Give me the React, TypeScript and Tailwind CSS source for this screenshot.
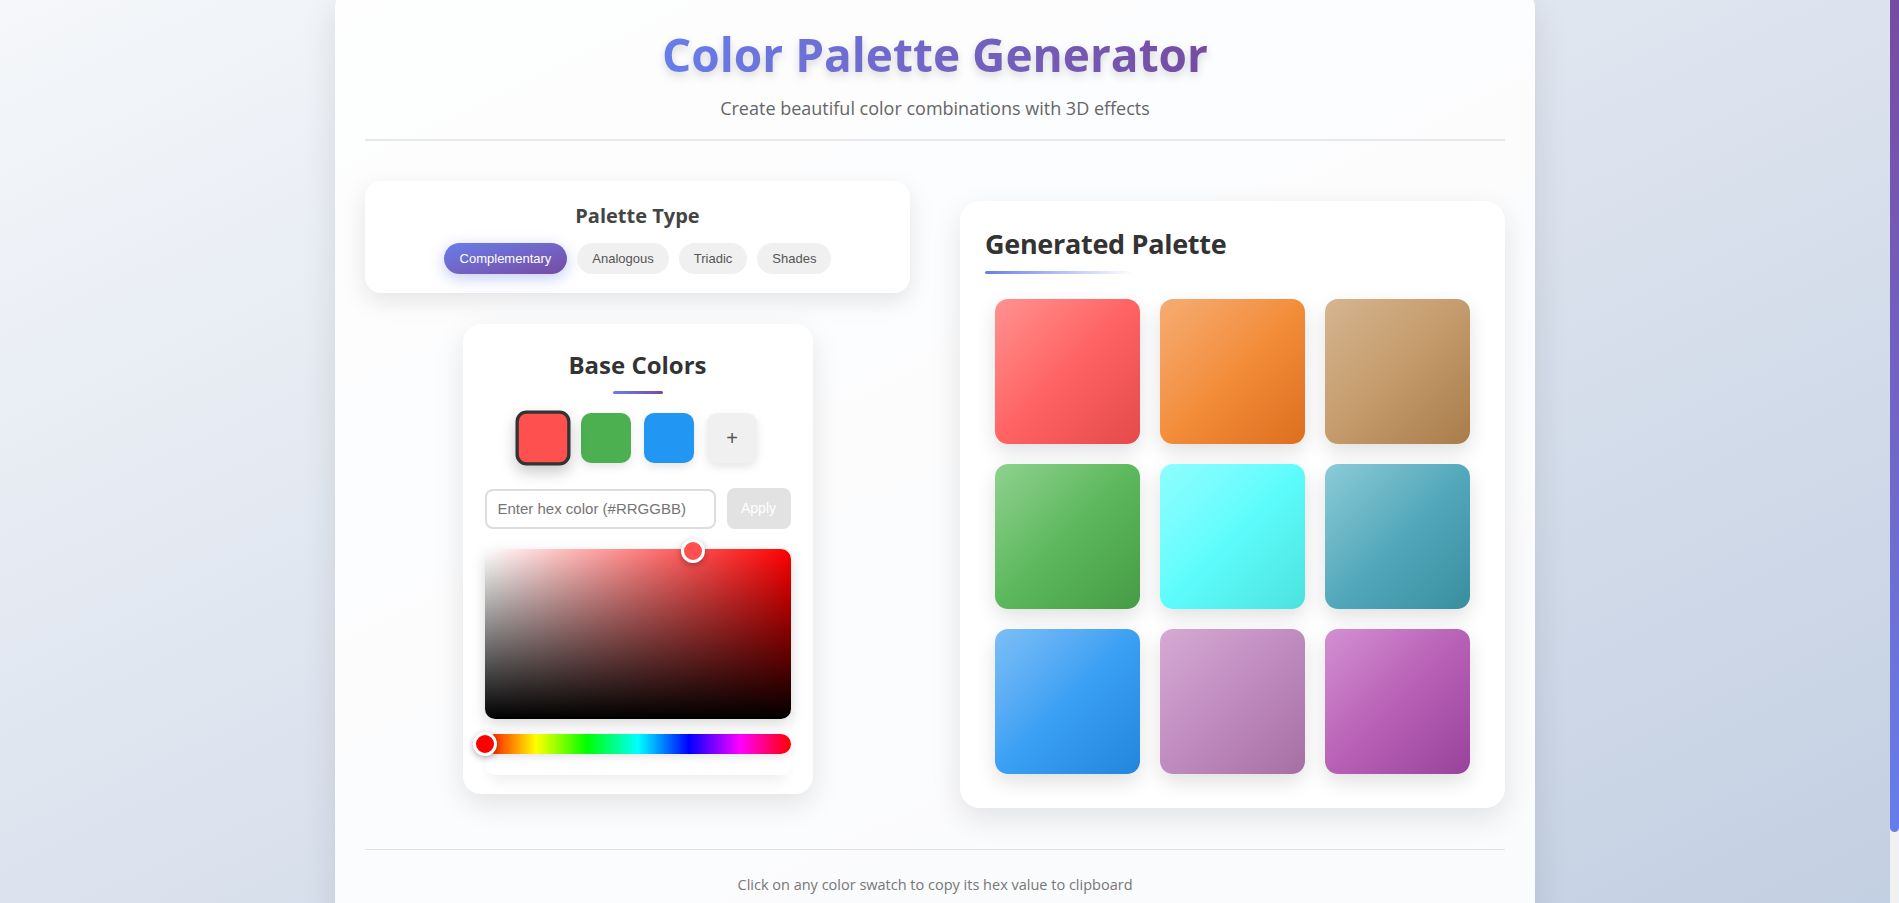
import React from "react";

const swatches = [
  "from-[#ff9191] via-[#ff6262] to-[#e44a4a]",
  "from-[#f6ac72] via-[#f38d3a] to-[#dc6f1e]",
  "from-[#d6b590] via-[#c49b6c] to-[#a97c4a]",
  "from-[#8fd18f] via-[#5cb85c] to-[#469b44]",
  "from-[#8efefe] via-[#5dfcfc] to-[#4ce2de]",
  "from-[#8ccbd7] via-[#53a9bb] to-[#388e9f]",
  "from-[#7cbef6] via-[#3aa0f4] to-[#2186dc]",
  "from-[#d5aad4] via-[#c08bbf] to-[#a56fa2]",
  "from-[#d390d2] via-[#b860b6] to-[#98439b]",
];

export default function App() {
  return (
    <div className="h-screen overflow-y-auto bg-gradient-to-br from-[#f5f7fa] to-[#c3cfe2] font-['Open_Sans',sans-serif] [&::-webkit-scrollbar]:w-[9px] [&::-webkit-scrollbar-track]:bg-[#f1f1f1] [&::-webkit-scrollbar-thumb]:rounded-[5px] [&::-webkit-scrollbar-thumb]:[background-image:linear-gradient(45deg,#667eea,#764ba2)]">
      <div className="pl-[335px] pb-[55px]">
        <div className="-mt-3 w-[1200px] rounded-[20px] bg-white/90 px-[30px] pt-[39px] pb-[30px] shadow-[0_15px_35px_rgba(0,0,0,0.1)]">
          <header className="flex flex-col items-center border-b-2 border-[#e6e8ee] pb-[17px]">
            <h1 className="bg-gradient-to-r from-[#667eea] to-[#764ba2] bg-clip-text text-[46px] font-bold leading-[1.2] text-transparent drop-shadow-[0_4px_4px_rgba(0,0,0,0.15)]">
              Color Palette Generator
            </h1>
            <p className="mt-[13px] text-[18px] leading-[1.5] text-[#666]">
              Create beautiful color combinations with 3D effects
            </p>
          </header>

          <div className="mt-[40px] grid grid-cols-2 items-start gap-[50px]">
            <div className="flex flex-col items-center gap-[31px]">
              <div className="w-full rounded-[16px] bg-white px-5 pt-5 pb-[19px] shadow-[0_8px_25px_rgba(0,0,0,0.1)]">
                <h3 className="text-center text-[20px] font-bold leading-[1.5] text-[#444]">Palette Type</h3>
                <div className="mt-[12px] flex justify-center gap-[10px] font-['Liberation_Sans',Arial,sans-serif] text-[13px] leading-[normal]">
                  <button className="rounded-full bg-gradient-to-br from-[#667eea] to-[#764ba2] px-[16px] py-[8px] text-white shadow-[0_4px_15px_rgba(102,126,234,0.4)]">
                    Complementary
                  </button>
                  <button className="rounded-full bg-[#f0f0f0] px-[15px] py-[8px] text-[#555]">Analogous</button>
                  <button className="rounded-full bg-[#f0f0f0] px-[15px] py-[8px] text-[#555]">Triadic</button>
                  <button className="rounded-full bg-[#f0f0f0] px-[15px] py-[8px] text-[#555]">Shades</button>
                </div>
              </div>

              <div className="w-[350px] rounded-[18px] bg-white px-[22px] pt-[23px] pb-[19px] shadow-[0_10px_30px_rgba(0,0,0,0.1)]">
                <h3 className="text-center text-[24px] font-bold leading-[1.5] text-[#333]">Base Colors</h3>
                <div className="mx-auto mt-[8px] h-[3px] w-[50px] rounded-full bg-gradient-to-r from-[#667eea] to-[#764ba2]" />
                <div className="mt-[19px] flex items-center justify-center gap-[13px]">
                  <div className="h-[50px] w-[50px] scale-110 rounded-[10px] border-[3px] border-[#333] bg-[#ff5050] shadow-[0_6px_14px_rgba(0,0,0,0.22)]" />
                  <div className="h-[50px] w-[50px] rounded-[10px] bg-[#4caf50] shadow-[0_4px_10px_rgba(0,0,0,0.1)]" />
                  <div className="h-[50px] w-[50px] rounded-[10px] bg-[#2196f3] shadow-[0_4px_10px_rgba(0,0,0,0.1)]" />
                  <button className="flex h-[50px] w-[50px] items-center justify-center rounded-[10px] bg-[#f0f0f0] font-['Liberation_Sans',Arial,sans-serif] text-[20px] text-[#555] shadow-[0_4px_10px_rgba(0,0,0,0.1)]">
                    +
                  </button>
                </div>
                <div className="mt-[25px] flex items-center gap-[11px] font-['Liberation_Sans',Arial,sans-serif]">
                  <input
                    className="h-[40px] min-w-0 flex-1 rounded-[8px] border-2 border-[#dddddd] bg-white px-[11px] text-[15px] text-[#333] outline-none placeholder:text-[#757575]"
                    placeholder="Enter hex color (#RRGGBB)"
                  />
                  <button className="h-[41px] w-[64px] rounded-[8px] bg-[#e2e2e2] text-[14px] text-white">Apply</button>
                </div>
                <div className="mt-[20px] rounded-[10px] pb-[21px] shadow-[0_12px_14px_-6px_rgba(0,0,0,0.07)]">
                  <div className="relative h-[170px] rounded-[10px] [background-image:linear-gradient(to_bottom,rgba(0,0,0,0),#000),linear-gradient(to_right,#fff,#f00)] shadow-[0_5px_15px_rgba(0,0,0,0.15)]">
                    <div className="absolute left-[68%] top-[2px] h-[24px] w-[24px] -translate-x-1/2 -translate-y-1/2 rounded-full border-[3px] border-white bg-[#ff4f4f] shadow-[0_2px_6px_rgba(0,0,0,0.3)]" />
                  </div>
                  <div className="relative mt-[15px] h-[20px] rounded-full [background-image:linear-gradient(to_right,#f00,#ff0,#0f0,#0ff,#00f,#f0f,#f00)] shadow-[0_3px_8px_rgba(0,0,0,0.1)]">
                    <div className="absolute left-0 top-1/2 h-[24px] w-[24px] -translate-x-1/2 -translate-y-1/2 rounded-full border-[3px] border-white bg-[#ff0000] shadow-[0_2px_6px_rgba(0,0,0,0.3)]" />
                  </div>
                </div>
              </div>
            </div>

            <div className="mt-[20px] rounded-[20px] bg-white px-[25px] pt-[22px] pb-[24px] shadow-[0_10px_30px_rgba(0,0,0,0.1)]">
              <h2 className="text-[27px] font-bold leading-[1.55] tracking-[-0.3px] text-[#333]">Generated Palette</h2>
              <div className="mt-[6px] h-[3px] w-[148px] rounded-full bg-gradient-to-r from-[#667eea] to-[rgba(102,126,234,0)]" />
              <div className="mt-[15px] grid grid-cols-3 gap-[20px] p-[10px]">
                {swatches.map((c, i) => (
                  <div
                    key={i}
                    className={`aspect-square rounded-[13px] bg-gradient-to-br ${c} shadow-[0_8px_20px_rgba(0,0,0,0.12)]`}
                  />
                ))}
              </div>
            </div>
          </div>

          <footer className="mt-[41px] border-t border-[#e0e2e6] pt-[24px] text-center text-[14.5px] leading-[1.5] text-[#777]">
            Click on any color swatch to copy its hex value to clipboard
          </footer>
        </div>
      </div>

      <div aria-hidden="true" className="fixed right-0 top-0 flex h-screen w-[9px] flex-col bg-[#f1f1f1]">
        <div className="h-[832px] rounded-b-[5px] bg-gradient-to-t from-[#667eea] to-[#764ba2]" />
      </div>
    </div>
  );
}
